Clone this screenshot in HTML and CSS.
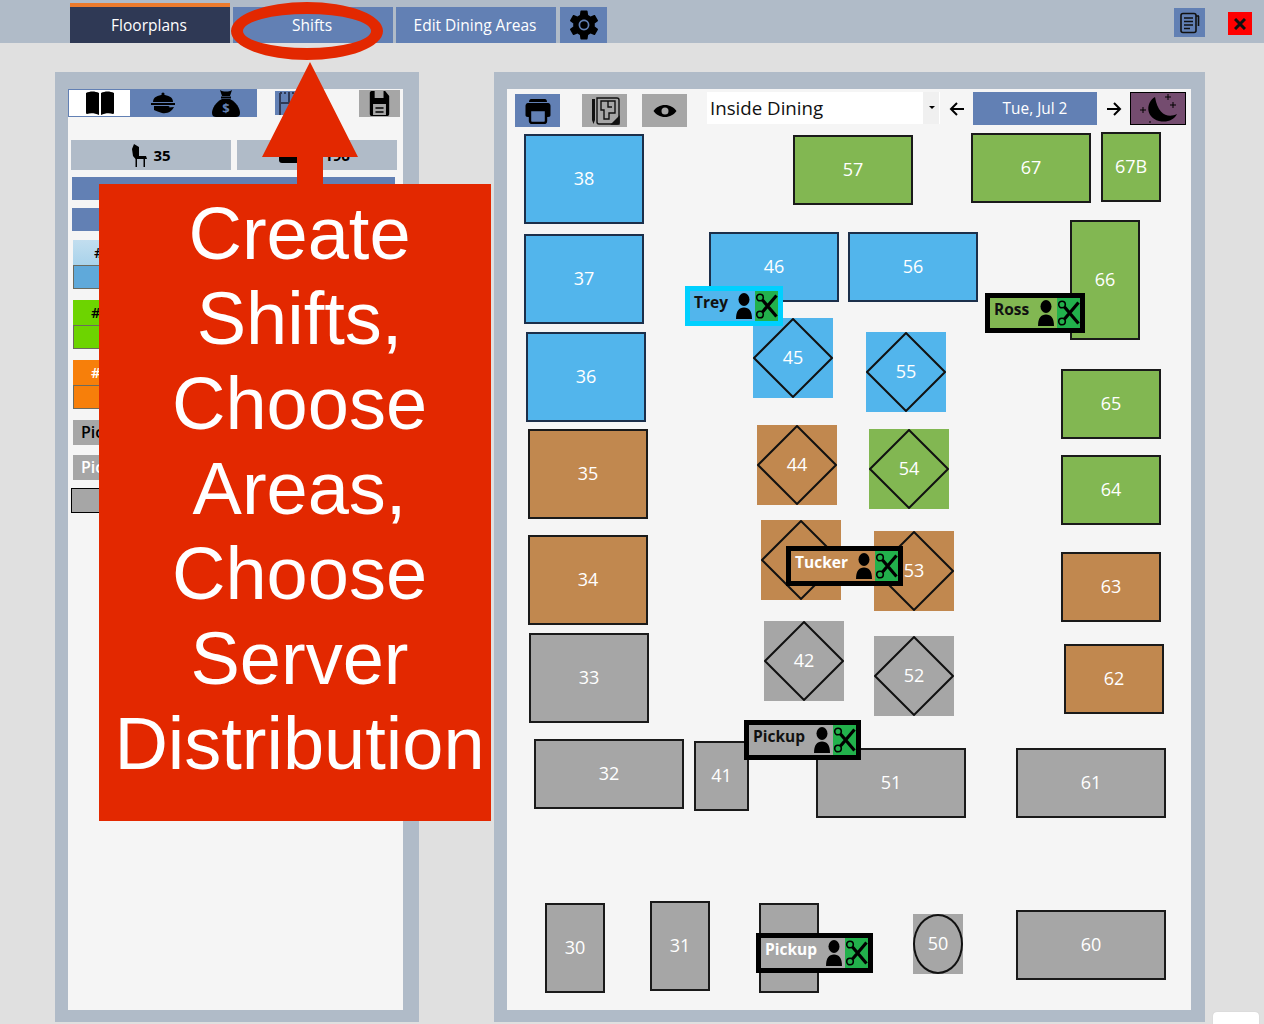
FILE: index.html
```html
<!DOCTYPE html>
<html>
<head>
    <title>Shifts</title>
    <link rel="stylesheet" href="styles.css">
</head>
<body>
    <!-- shared icons -->
    <svg class="defs">
        <symbol id="person" viewBox="0 0 16 28">
            <ellipse cx="8" cy="7.5" rx="5.5" ry="6.5"/>
            <path d="M0 27C0 19 3 15.5 8 15.5S16 19 16 27Z"/>
        </symbol>
        <symbol id="scissors" viewBox="0 0 23 30">
            <g fill="none" stroke="#000">
                <circle cx="5" cy="6.5" r="3.3" stroke-width="1.6"/>
                <circle cx="5" cy="23.5" r="3.3" stroke-width="1.6"/>
                <path d="M7.5 9L21.5 25.5M7.5 21L21.5 4.5" stroke-width="3.2"/>
            </g>
        </symbol>
        <symbol id="diamond" viewBox="0 0 80 80">
            <polygon points="40,1 79,40 40,79 1,40" fill="none" stroke="#111" stroke-width="2"/>
        </symbol>
    </svg>

    <!-- top tabs -->
    <header class="topbar">
        <a class="tab tab-active">Floorplans</a>
        <a class="tab">Shifts</a>
        <a class="tab tab-edit">Edit Dining Areas</a>
        <a class="tab tab-gear">
            <svg width="36" height="36" viewBox="0 0 24 24">
                <path d="M19.14,12.94c0.04-0.3,0.06-0.61,0.06-0.94c0-0.32-0.02-0.64-0.07-0.94l2.03-1.58c0.18-0.14,0.23-0.41,0.12-0.61l-1.92-3.32c-0.12-0.22-0.37-0.29-0.59-0.22l-2.39,0.96c-0.5-0.38-1.03-0.7-1.62-0.94L14.4,2.81c-0.04-0.24-0.24-0.41-0.48-0.41h-3.84c-0.24,0-0.43,0.17-0.47,0.41L9.25,5.35C8.66,5.59,8.12,5.92,7.63,6.29L5.24,5.33c-0.22-0.08-0.47,0-0.59,0.22L2.74,8.87C2.62,9.08,2.66,9.34,2.86,9.48l2.03,1.58C4.84,11.36,4.8,11.69,4.8,12s0.02,0.64,0.07,0.94l-2.03,1.58c-0.18,0.14-0.23,0.41-0.12,0.61l1.92,3.32c0.12,0.22,0.37,0.29,0.59,0.22l2.39-0.96c0.5,0.38,1.03,0.7,1.62,0.94l0.36,2.54c0.05,0.24,0.24,0.41,0.48,0.41h3.84c0.24,0,0.44-0.17,0.47-0.41l0.36-2.54c0.59-0.24,1.13-0.56,1.62-0.94l2.39,0.96c0.22,0.08,0.47,0,0.59-0.22l1.92-3.32c0.12-0.22,0.07-0.47-0.12-0.61L19.14,12.94z M12,15.6c-1.98,0-3.6-1.62-3.6-3.6s1.62-3.6,3.6-3.6s3.6,1.62,3.6,3.6S13.98,15.6,12,15.6z"/>
                <circle cx="12" cy="12" r="2.5"/>
            </svg>
        </a>
        <a class="notes-btn">
            <svg width="24" height="24" viewBox="0 0 24 24" fill="none" stroke="#111" stroke-width="1.6">
                <rect x="3" y="2.5" width="15" height="19" rx="2"/>
                <path d="M6 7H15M6 10.5H15M6 14H15M6 17.5H12M20.5 5V15"/>
                <path d="M18 5H21"/>
            </svg>
        </a>
        <a class="close-btn">
            <svg width="12" height="12" viewBox="0 0 12 12" stroke="#111" stroke-width="3">
                <path d="M1 1L11 11M11 1L1 11"/>
            </svg>
        </a>
    </header>

    <main class="content">
        <!-- left side panel -->
        <section class="panel side-panel">
            <div class="side-tabs">
                <a class="side-tab side-tab-on">
                    <svg width="30" height="26" viewBox="0 0 30 26">
                        <path d="M1 3C5 1 10 1 14 3V25C10 23 5 23 2 24C1 24 1 23 1 22Z"/>
                        <path d="M29 3C25 1 20 1 16 3V25C20 23 25 23 28 24C29 24 29 23 29 22Z"/>
                    </svg>
                </a>
                <a class="side-tab">
                    <svg width="26" height="24" viewBox="0 0 26 24">
                        <circle cx="13" cy="3" r="1.6"/>
                        <path d="M3 11C3 6 8 4 13 4S23 6 23 11Z"/>
                        <rect x="1" y="12" width="24" height="2"/>
                        <path d="M4 15H18C20 15 20 17 18 17H14L24 16C22 20 18 23 12 22C9 21 6 20 4 19Z"/>
                    </svg>
                </a>
                <a class="side-tab">
                    <svg width="30" height="28" viewBox="0 0 30 28">
                        <path d="M9 1C12 3 18 3 21 1L19 7H11Z"/>
                        <rect x="10" y="7.5" width="10" height="2"/>
                        <path d="M11 10H19C25 13 29 19 29 24C29 27 27 28 25 28H5C3 28 1 27 1 24C1 19 5 13 11 10Z"/>
                        <text x="15" y="24" class="bag-sign">$</text>
                    </svg>
                </a>
                <a class="side-tab side-tab-plan">
                    <svg width="32" height="24" viewBox="0 0 32 24" fill="none" stroke="#2f3955">
                        <path d="M1 2H31" stroke-dasharray="2 2" stroke-width="2"/>
                        <path d="M1 12H31M1 2V24M10 2V12" stroke-width="2"/>
                    </svg>
                </a>
                <a class="side-tab-save">
                    <svg width="21" height="27" viewBox="0 0 26 27" preserveAspectRatio="none">
                        <path fill-rule="evenodd" d="M3 1H20L25 6V24C25 25 24 26 23 26H3C2 26 1 25 1 24V3C1 2 2 1 3 1ZM7 1V8H18V1ZM5 14V25H21V14Z"/>
                        <path d="M8 18H18M8 22H18" stroke="#000" stroke-width="1.6"/>
                    </svg>
                </a>
            </div>

            <div class="stats">
                <div class="stat">
                    <svg width="17" height="24" viewBox="0 0 17 24">
                        <path d="M3 1L8 4V13H15L16 16H14V24H12.5V16H6V24H4.5V16L2 13L1 6Z"/>
                    </svg>
                    35
                </div>
                <div class="stat stat-money">
                    <svg width="30" height="16" viewBox="0 0 30 16">
                        <rect width="30" height="16" rx="3"/>
                    </svg>
                    196
                </div>
            </div>

            <div class="side-bar"></div>
            <div class="side-bar"></div>

            <div class="swatch">
                <div class="swatch-head head-blue">#</div>
                <div class="swatch-box box-blue"></div>
            </div>
            <div class="swatch">
                <div class="swatch-head head-green">#</div>
                <div class="swatch-box box-green"></div>
            </div>
            <div class="swatch">
                <div class="swatch-head head-orange">#</div>
                <div class="swatch-box box-orange"></div>
            </div>
            <div class="pick">Pickup</div>
            <div class="pick pick-white">Pickup</div>
            <div class="pick-box"></div>
        </section>

        <!-- floor plan -->
        <section class="panel floor-panel">
            <div class="toolbar">
                <a class="tool tool-blue">
                    <svg width="26" height="26" viewBox="0 0 26 26">
                        <path fill-rule="evenodd" d="M6 1H20C21 1 22 2 22 4H4C4 2 5 1 6 1ZM3 5H23C25 5 25.5 7 25.5 8V17C25.5 18 25 19 23 19H21V11H5V19H3C1 19 0.5 18 0.5 17V8C0.5 7 1 5 3 5Z"/>
                        <path d="M5 12H21V23C21 24 20 25 19 25H7C6 25 5 24 5 23Z" fill="none" stroke="#000" stroke-width="2.4"/>
                    </svg>
                </a>
                <a class="tool tool-plan">
                    <svg width="30" height="30" viewBox="0 0 30 30" fill="none" stroke="#111" stroke-width="1.4">
                        <path d="M7 2H27C28 2 29 3 29 4V26C29 27 28 28 27 28H9C8 28 7 27 7 26Z"/>
                        <path d="M11 5H25V17H19V23H14V14H11ZM18 5V11H22"/>
                        <path d="M22 28L29 21V28Z" fill="#111"/>
                        <path d="M2 3V24L3.5 28L5 24V3Z" fill="#111" stroke="none"/>
                    </svg>
                </a>
                <a class="tool tool-eye">
                    <svg width="24" height="14" viewBox="0 0 24 14">
                        <path fill-rule="evenodd" d="M12 1C17 1 21 3.5 23.5 7C21 10.5 17 13 12 13S3 10.5 0.5 7C3 3.5 7 1 12 1ZM12 3.5A3.5 3.5 0 1 0 12 10.5A3.5 3.5 0 1 0 12 3.5Z"/>
                    </svg>
                </a>
                <div class="area-select">
                    <span class="area-name">Inside Dining</span>
                    <span class="area-caret"></span>
                </div>
                <a class="nav-arrow">
                    <svg width="16" height="16" viewBox="0 0 16 16" fill="none" stroke="#000" stroke-width="2">
                        <path d="M15 8H2M8 2L2 8L8 14"/>
                    </svg>
                </a>
                <a class="date-btn">Tue, Jul 2</a>
                <a class="nav-arrow">
                    <svg width="16" height="16" viewBox="0 0 16 16" fill="none" stroke="#000" stroke-width="2">
                        <path d="M1 8H14M8 2L14 8L8 14"/>
                    </svg>
                </a>
                <a class="moon-btn">
                    <svg width="54" height="31" viewBox="0 0 54 31">
                        <path d="M24 4C15 9 14 24 28 28C36 30 43 27 46 21C38 25 27 23 24 4Z"/>
                        <path d="M12 14V20M9 17H15M37 1V7M34 4H40M42 9V15M39 12H45M19 28V30" stroke="#000" stroke-width="1"/>
                    </svg>
                </a>
            </div>

            <div class="floor">
                <div class="tbl blue t38">38</div>
                <div class="tbl blue t37">37</div>
                <div class="tbl blue t36">36</div>
                <div class="tbl brown t35">35</div>
                <div class="tbl brown t34">34</div>
                <div class="tbl gray t33">33</div>
                <div class="tbl gray t32">32</div>
                <div class="tbl gray t41">41</div>
                <div class="tbl gray t51">51</div>
                <div class="tbl gray t61">61</div>
                <div class="tbl gray t30">30</div>
                <div class="tbl gray t31">31</div>
                <div class="tbl gray t40"></div>
                <div class="tbl gray t60">60</div>
                <div class="tbl green t57">57</div>
                <div class="tbl green t67">67</div>
                <div class="tbl green t67b">67B</div>
                <div class="tbl blue t46">46</div>
                <div class="tbl blue t56">56</div>
                <div class="tbl green t66">66</div>
                <div class="tbl green t65">65</div>
                <div class="tbl green t64">64</div>
                <div class="tbl brown t63">63</div>
                <div class="tbl brown t62">62</div>

                <div class="dia blue t45"><svg class="dia-line"><use href="#diamond"/></svg>45</div>
                <div class="dia blue t55"><svg class="dia-line"><use href="#diamond"/></svg>55</div>
                <div class="dia brown t44"><svg class="dia-line"><use href="#diamond"/></svg>44</div>
                <div class="dia green t54"><svg class="dia-line"><use href="#diamond"/></svg>54</div>
                <div class="dia brown t43"><svg class="dia-line"><use href="#diamond"/></svg></div>
                <div class="dia brown t53"><svg class="dia-line"><use href="#diamond"/></svg>53</div>
                <div class="dia gray t42"><svg class="dia-line"><use href="#diamond"/></svg>42</div>
                <div class="dia gray t52"><svg class="dia-line"><use href="#diamond"/></svg>52</div>

                <div class="round gray t50"><span class="round-line">50</span></div>

                <!-- servers on tables -->
                <div class="badge badge-trey blue">
                    <span class="badge-name name-dark">Trey</span>
                    <svg class="badge-person"><use href="#person"/></svg>
                    <svg class="badge-cut"><use href="#scissors"/></svg>
                </div>
                <div class="badge badge-ross green">
                    <span class="badge-name name-dark">Ross</span>
                    <svg class="badge-person"><use href="#person"/></svg>
                    <svg class="badge-cut"><use href="#scissors"/></svg>
                </div>
                <div class="badge badge-tucker brown">
                    <span class="badge-name">Tucker</span>
                    <svg class="badge-person"><use href="#person"/></svg>
                    <svg class="badge-cut"><use href="#scissors"/></svg>
                </div>
                <div class="badge badge-pick1 gray">
                    <span class="badge-name name-dark">Pickup</span>
                    <svg class="badge-person"><use href="#person"/></svg>
                    <svg class="badge-cut"><use href="#scissors"/></svg>
                </div>
                <div class="badge badge-pick2 gray">
                    <span class="badge-name">Pickup</span>
                    <svg class="badge-person"><use href="#person"/></svg>
                    <svg class="badge-cut"><use href="#scissors"/></svg>
                </div>
            </div>
        </section>
    </main>

    <div class="corner-tab"></div>

    <!-- red tutorial callout over the page -->
    <div class="ring"></div>
    <svg class="arrow" width="96" height="123" viewBox="0 0 96 123">
        <polygon points="48,0 96,95 61,95 61,123 35,123 35,95 0,95"/>
    </svg>
    <div class="callout">Create<br>Shifts,<br>Choose<br>Areas,<br>Choose<br>Server<br>Distribution</div>
</body>
</html>
```

FILE: styles.css
```css
/* colors */
:root {
    --slate: #b0bbc8;
    --tab-blue: #6280b4;
    --tab-dark: #2f3955;
    --page: #e0e0e0;
    --sheet: #f5f5f5;
    --callout: #e32800;
}

body {
    margin: 0;
    height: 1024px;
    overflow: hidden;
    position: relative;
    background-color: var(--page);
    font-family: "Open Sans", "Noto Sans", sans-serif;
    color: #000;
}

.defs {
    display: none;
}

/* top tabs */
.topbar {
    height: 43px;
    box-sizing: border-box;
    background-color: var(--slate);
    display: flex;
    align-items: flex-end;
    padding-left: 70px;
}

.tab {
    width: 160px;
    height: 36px;
    margin-right: 3px;
    background-color: var(--tab-blue);
    color: #fff;
    font-size: 15.5px;
    display: flex;
    align-items: center;
    justify-content: center;
    padding: 0 2px 1px 0;
    box-sizing: border-box;
}

.tab-active {
    height: 40px;
    border-top: 4px solid #ec7a2c;
    background-color: var(--tab-dark);
}

.tab-gear {
    width: 47px;
    margin-left: 1px;
    padding: 0;
}

.notes-btn {
    width: 31px;
    height: 29px;
    margin-left: 564px;
    margin-bottom: 6px;
    background-color: var(--tab-blue);
    display: flex;
    align-items: center;
    justify-content: center;
}

.close-btn {
    width: 24px;
    height: 23px;
    margin-left: 23px;
    margin-bottom: 8px;
    background-color: #ff0000;
    display: flex;
    align-items: center;
    justify-content: center;
}

/* main panels */
.content {
    display: flex;
    padding: 29px 0 0 55px;
}

.panel {
    height: 950px;
    box-sizing: border-box;
    background-color: var(--sheet);
    border: solid var(--slate);
    border-width: 17px 14px 12px 13px;
}

.side-panel {
    width: 364px;
    border-right-width: 16px;
    margin-right: 75px;
}

.floor-panel {
    width: 711px;
}

/* left panel */
.side-tabs {
    display: flex;
    height: 28px;
}

.side-tab {
    width: 63px;
    height: 28px;
    background-color: var(--tab-blue);
    display: flex;
    align-items: center;
    justify-content: center;
    box-sizing: border-box;
}

.side-tab-on {
    background-color: #fff;
    border: 1px solid var(--tab-blue);
}

.side-tab-plan {
    width: 40px;
    height: 24px;
    margin: 2px 0 0 18px;
}

.side-tab-save {
    width: 41px;
    height: 27px;
    margin: 1px 3px 0 auto;
    background-color: #a6a6a6;
    display: flex;
    align-items: center;
    justify-content: center;
}

.bag-sign {
    font-size: 13px;
    font-weight: 700;
    text-anchor: middle;
    fill: var(--tab-blue);
}

.stats {
    display: flex;
    gap: 6px;
    margin: 23px 6px 0 3px;
}

.stat {
    flex: 0 0 160px;
    height: 30px;
    background-color: var(--slate);
    display: flex;
    align-items: center;
    justify-content: center;
    gap: 5px;
    font-size: 15px;
    font-weight: 700;
}

.stat-money {
    gap: 15px;
    box-sizing: border-box;
    padding-right: 5px;
}

.side-bar {
    height: 23px;
    width: 323px;
    margin: 7px 0 0 4px;
    background-color: var(--tab-blue);
}

.side-bar + .side-bar {
    margin-top: 8px;
}

.swatch {
    margin: 0 8px 11px 5px;
}

.side-bar + .swatch {
    margin-top: 9px;
}

.swatch-head {
    height: 25px;
    padding-left: 18px;
    font-size: 15px;
    font-weight: 600;
    line-height: 25px;
}

.swatch-box {
    height: 24px;
    border: 1px solid #6b6b5f;
    box-sizing: border-box;
}

.head-blue {
    background: linear-gradient(#c2deef, #a9d3eb);
    padding-left: 21px;
}

.box-blue {
    background-color: #5fa9da;
}

.head-green,
.box-green {
    background-color: #6dd400;
}

.head-orange,
.box-orange {
    background-color: #f77f0a;
}

.head-orange {
    color: #fff;
}

.pick {
    height: 25px;
    margin: 0 8px 10px 5px;
    padding-left: 8px;
    background-color: #a6a6a6;
    font-size: 16px;
    font-weight: 600;
    line-height: 25px;
}

.pick-white {
    color: #fff;
    margin-bottom: 8px;
}

.pick-box {
    height: 25px;
    margin: 0 8px 0 3px;
    background-color: #a6a6a6;
    border: 1px solid #000;
    box-sizing: border-box;
}

/* toolbar over the floor */
.toolbar {
    height: 41px;
    box-sizing: border-box;
    display: flex;
    padding: 3px 0 5px 8px;
    align-items: flex-start;
}

.tool {
    width: 45px;
    height: 33px;
    margin-top: 2px;
    margin-right: 22px;
    display: flex;
    align-items: center;
    justify-content: center;
}

.tool-blue {
    background-color: var(--tab-blue);
}

.tool-plan {
    background-color: #a6a6a6;
    margin-right: 15px;
}

.tool-eye {
    background-color: #a6a6a6;
    margin-right: 20px;
}

.area-select {
    width: 233px;
    height: 32px;
    background-color: #fff;
    display: flex;
    justify-content: space-between;
}

.area-name {
    padding-left: 3px;
    font-size: 18.7px;
    line-height: 32px;
    color: #111;
}

.area-caret {
    width: 16px;
    background-color: #f0f0f0;
    position: relative;
    margin-right: 1px;
}

.area-caret::after {
    content: "";
    position: absolute;
    left: 6px;
    top: 14px;
    border: 3px solid transparent;
    border-top-color: #000;
}

.nav-arrow {
    width: 33px;
    height: 33px;
    display: flex;
    align-items: center;
    justify-content: center;
}

.date-btn {
    width: 124px;
    height: 33px;
    background-color: var(--tab-blue);
    color: #fff;
    font-size: 15.4px;
    line-height: 33px;
    text-align: center;
}

.moon-btn {
    width: 56px;
    height: 33px;
    box-sizing: border-box;
    background-color: #744c6f;
    border: 1px solid #000;
}

/* floor plan: places of the tables are the content */
.floor {
    position: relative;
    height: 879px;
}

.tbl,
.dia,
.round {
    position: absolute;
    box-sizing: border-box;
    display: flex;
    align-items: center;
    justify-content: center;
    color: #fff;
    font-size: 18px;
}

.tbl {
    border: 2px solid #1a1a1a;
    padding-bottom: 2px;
}

.dia {
    width: 80px;
    height: 80px;
    padding-bottom: 2px;
}

.dia-line {
    position: absolute;
    left: 0;
    top: 0;
    width: 80px;
    height: 80px;
}

.round-line {
    width: 100%;
    height: 100%;
    box-sizing: border-box;
    border: 2px solid #111;
    border-radius: 50%;
    padding-bottom: 2px;
    display: flex;
    align-items: center;
    justify-content: center;
}

.blue {
    background-color: #52b5ec;
}

.blue.tbl {
    border-color: #1c2f4a;
}

.green {
    background-color: #82b752;
}

.brown {
    background-color: #c1884f;
}

.gray {
    background-color: #a6a6a6;
}

.t38 { left: 17px; top: 4px; width: 120px; height: 90px; }
.t37 { left: 17px; top: 104px; width: 120px; height: 90px; }
.t36 { left: 19px; top: 202px; width: 120px; height: 90px; }
.t35 { left: 21px; top: 299px; width: 120px; height: 90px; }
.t34 { left: 21px; top: 405px; width: 120px; height: 90px; }
.t33 { left: 22px; top: 503px; width: 120px; height: 90px; }
.t32 { left: 27px; top: 609px; width: 150px; height: 70px; }
.t41 { left: 187px; top: 611px; width: 55px; height: 70px; }
.t51 { left: 309px; top: 618px; width: 150px; height: 70px; }
.t61 { left: 509px; top: 618px; width: 150px; height: 70px; }
.t30 { left: 38px; top: 773px; width: 60px; height: 90px; }
.t31 { left: 143px; top: 771px; width: 60px; height: 90px; }
.t40 { left: 252px; top: 773px; width: 60px; height: 90px; }
.t60 { left: 509px; top: 780px; width: 150px; height: 70px; }
.t57 { left: 286px; top: 5px; width: 120px; height: 70px; }
.t67 { left: 464px; top: 3px; width: 120px; height: 70px; }
.t67b { left: 594px; top: 2px; width: 60px; height: 70px; }
.t46 { left: 202px; top: 102px; width: 130px; height: 70px; }
.t56 { left: 341px; top: 102px; width: 130px; height: 70px; }
.t66 { left: 563px; top: 90px; width: 70px; height: 120px; }
.t65 { left: 554px; top: 239px; width: 100px; height: 70px; }
.t64 { left: 554px; top: 325px; width: 100px; height: 70px; }
.t63 { left: 554px; top: 422px; width: 100px; height: 70px; }
.t62 { left: 557px; top: 514px; width: 100px; height: 70px; }
.t45 { left: 246px; top: 188px; }
.t55 { left: 359px; top: 202px; }
.t44 { left: 250px; top: 295px; }
.t54 { left: 362px; top: 299px; }
.t43 { left: 254px; top: 390px; }
.t53 { left: 367px; top: 401px; }
.t42 { left: 257px; top: 491px; }
.t52 { left: 367px; top: 506px; }
.t50 { left: 406px; top: 784px; width: 50px; height: 60px; }

/* server badges */
.badge {
    position: absolute;
    box-sizing: border-box;
    height: 40px;
    border: 5px solid #000;
    display: flex;
    align-items: stretch;
    z-index: 2;
}

.badge-name {
    flex: 1;
    padding-left: 4px;
    color: #fff;
    font-size: 15.5px;
    font-weight: 700;
    line-height: 22px;
}

.name-dark {
    color: #111;
}

.badge-person {
    width: 16px;
    height: 28px;
    margin: 1px 3px 0 0;
}

.badge-cut {
    width: 23px;
    height: 30px;
    background-color: #22b14c;
}

.badge-trey {
    left: 178px;
    top: 156px;
    width: 98px;
    border-color: #00d0ff;
}

.badge-ross {
    left: 478px;
    top: 163px;
    width: 100px;
}

.badge-tucker {
    left: 279px;
    top: 416px;
    width: 117px;
}

.badge-pick1 {
    left: 237px;
    top: 590px;
    width: 117px;
}

.badge-pick2 {
    left: 249px;
    top: 803px;
    width: 117px;
}

/* scrap of a box in the page corner */
.corner-tab {
    position: absolute;
    left: 1213px;
    top: 1012px;
    width: 46px;
    height: 20px;
    background-color: #fff;
    border-radius: 4px;
    box-shadow: 0 0 1px #bbb;
}

/* tutorial callout */
.ring {
    position: absolute;
    left: 231px;
    top: 2px;
    width: 152px;
    height: 58px;
    box-sizing: border-box;
    border: 12px solid var(--callout);
    border-radius: 50%;
    z-index: 5;
}

.arrow {
    position: absolute;
    left: 262px;
    top: 62px;
    z-index: 5;
    fill: var(--callout);
}

.callout {
    position: absolute;
    left: 99px;
    top: 184px;
    width: 392px;
    height: 637px;
    box-sizing: border-box;
    padding: 7px 0 0 9px;
    background-color: var(--callout);
    color: #fff;
    font-family: "Liberation Sans", Arial, sans-serif;
    font-size: 74px;
    line-height: 85px;
    text-align: center;
    white-space: nowrap;
    z-index: 5;
}
```
